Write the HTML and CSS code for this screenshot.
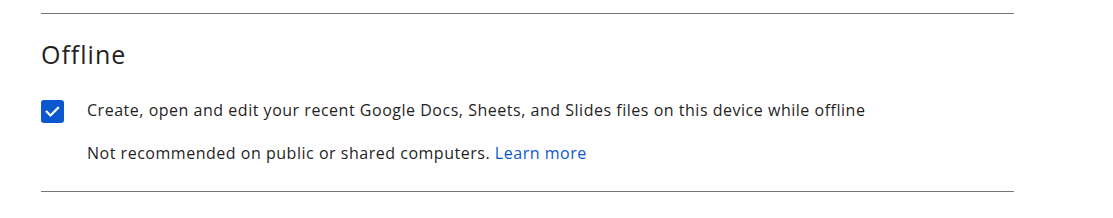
FILE: index.html
```html
<!DOCTYPE html>
<html>
<head>
<meta charset="utf-8">
<link rel="stylesheet" href="styles.css">
</head>
<body>
<div class="page">
  <section class="section">
    <h2 class="title">Offline</h2>
    <div class="row">
      <span class="checkbox">
        <svg width="24" height="24" viewBox="0 0 24 24"><path d="M5.5 12.3l4.2 4.2 8.6-8.6" fill="none" stroke="#fff" stroke-width="2.5" stroke-linecap="square"/></svg>
      </span>
      <div class="texts">
        <p class="label">Create, open and edit your recent Google Docs, Sheets, and Slides files on this device while offline</p>
        <p class="note">Not recommended on public or shared computers. <a class="link" href="#">Learn more</a></p>
      </div>
    </div>
  </section>
</div>
</body>
</html>
```

FILE: styles.css
```css
html, body {
  margin: 0;
  padding: 0;
  background: #fff;
}
.page {
  padding: 13px 0 0 41px;
  width: 973px;
}
.section {
  border-top: 1px solid #747775;
  border-bottom: 1px solid #747775;
  padding: 24px 0 26px 0;
}
.title {
  margin: 0;
  font-family: "Open Sans", sans-serif;
  font-weight: 400;
  font-size: 25px;
  letter-spacing: 1px;
  line-height: 32px;
  color: #1f1f1f;
}
.row {
  display: flex;
  align-items: flex-start;
  gap: 23px;
  margin-top: 28px;
}
.checkbox {
  width: 23px;
  height: 23px;
  border-radius: 3px;
  background: #0b57d0;
  display: flex;
  align-items: center;
  justify-content: center;
  flex: none;
  margin-top: 2px;
}
.checkbox svg {
  width: 21px;
  height: 21px;
}
.texts {
  font-family: "Open Sans", sans-serif;
  font-size: 16px;
  letter-spacing: 0.52px;
  color: #1f1f1f;
}
.label {
  margin: 0;
  line-height: 24px;
}
.note {
  margin: 19px 0 0 0;
  line-height: 24px;
}
.link {
  color: #0b57d0;
  text-decoration: none;
}
```
